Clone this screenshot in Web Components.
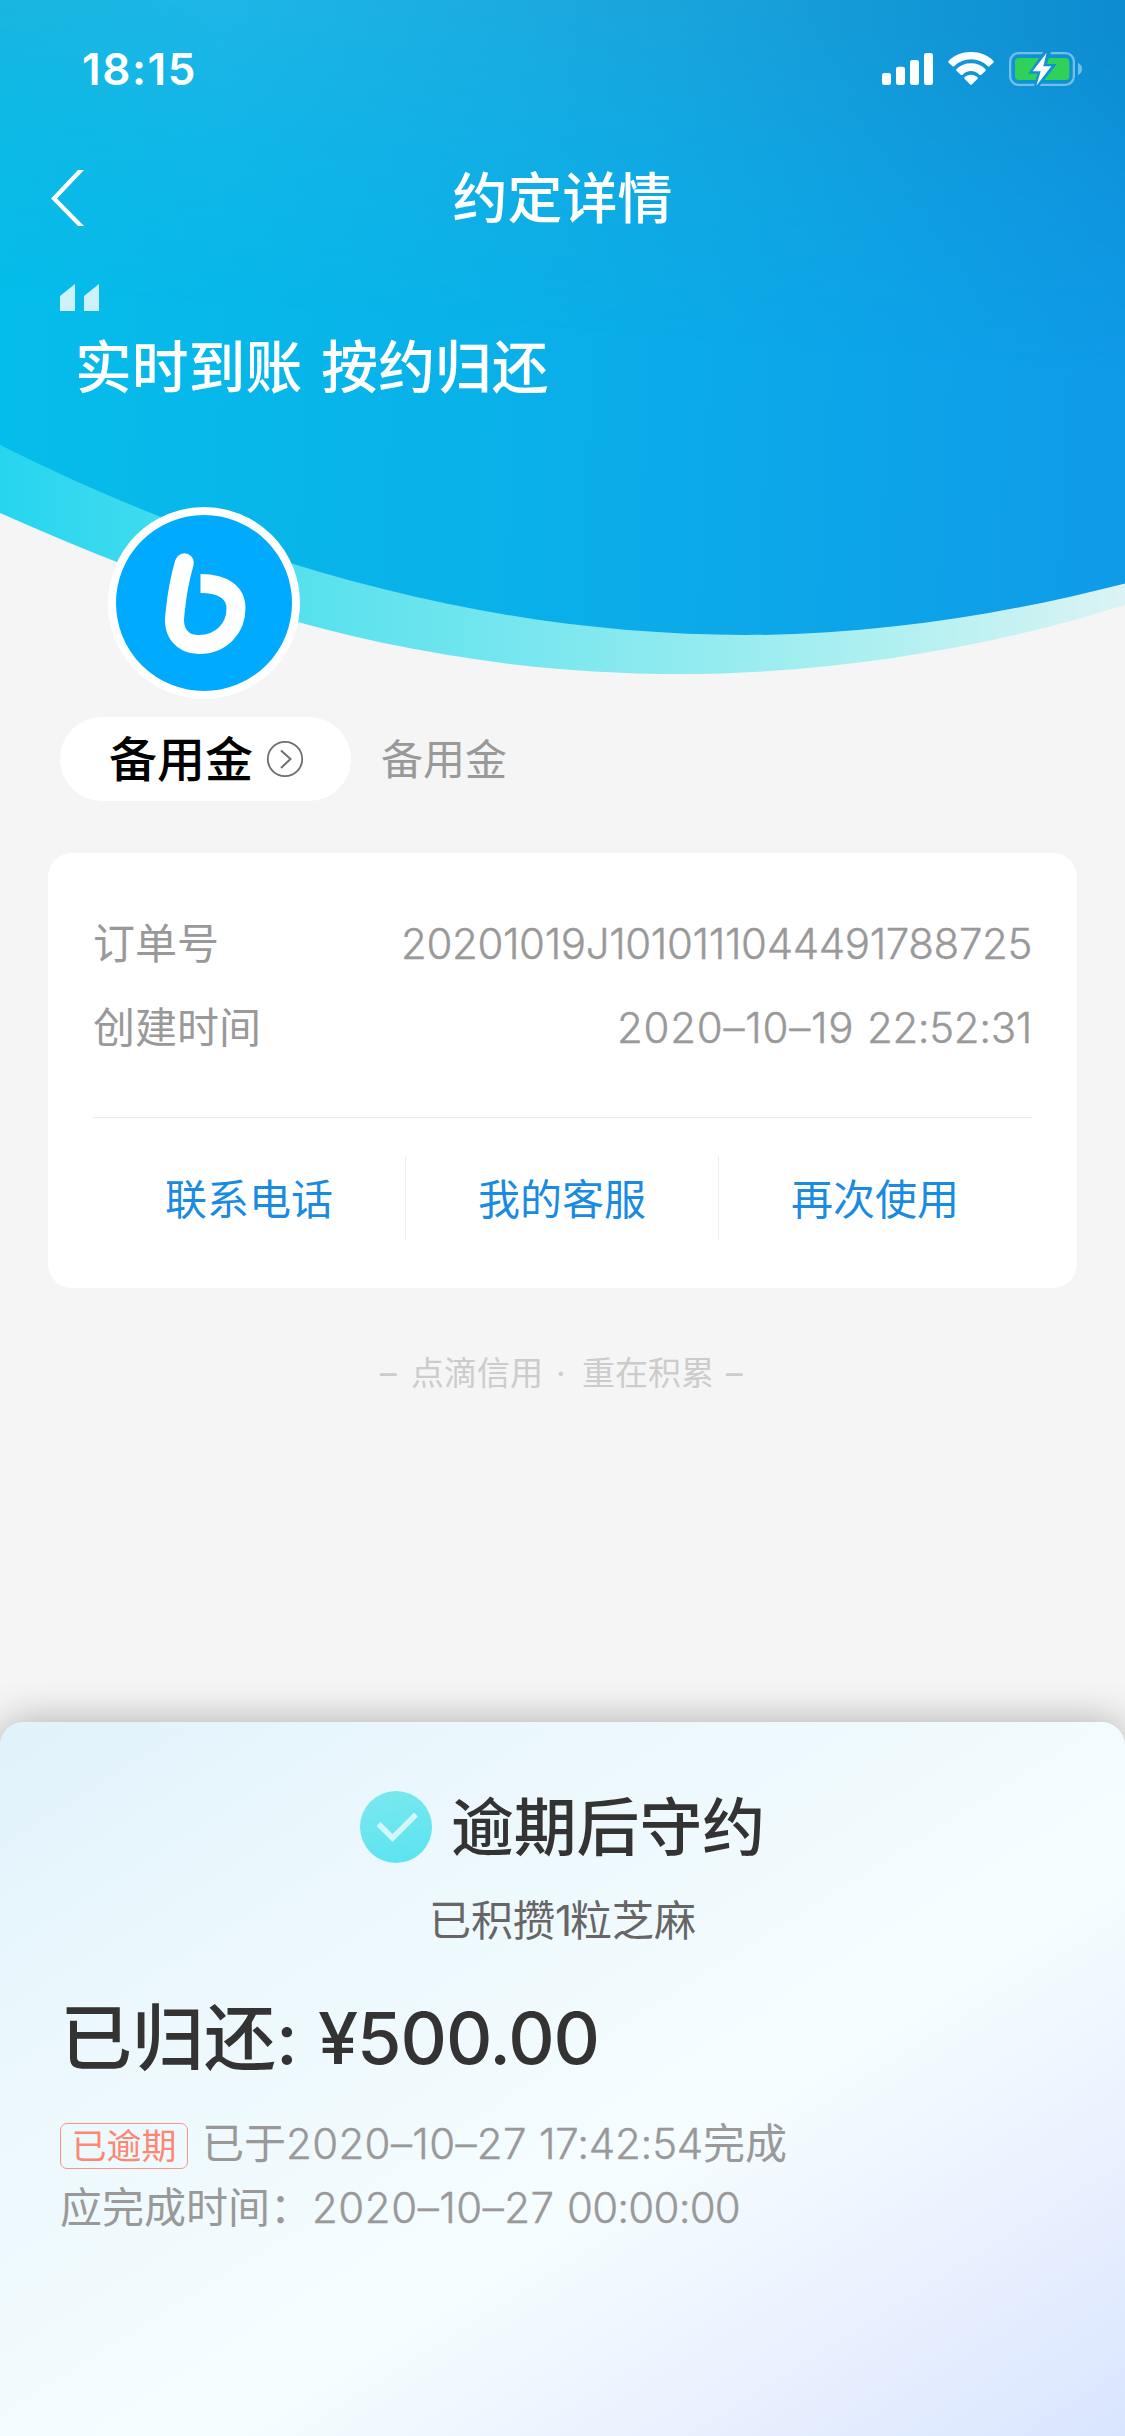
<!DOCTYPE html>
<html lang="zh-CN">
<head>
<meta charset="utf-8">
<title>约定详情</title>
<style>
html,body{margin:0;padding:0}
body{width:1125px;height:2436px;overflow:hidden;background:#f5f5f5;font-family:Inter,"Noto Sans CJK SC",sans-serif}
</style>
</head>
<body>
<agreement-page></agreement-page>
<script>
function define(name, html, setup) {
  const tpl = document.createElement('template');
  tpl.innerHTML = html;
  customElements.define(name, class extends HTMLElement {
    constructor() {
      super();
      this.attachShadow({mode: 'open'}).appendChild(tpl.content.cloneNode(true));
    }
    connectedCallback() { if (setup) setup(this); }
  });
}

/* Text run whose tracking is adjusted so that it fills a given advance width. */
define('fit-text', `<style>:host{display:inline-block;white-space:pre}span{display:inline-block}</style><span><slot></slot></span>`, el => {
  const span = el.shadowRoot.querySelector('span');
  const want = +el.getAttribute('width');
  const n = el.textContent.length;
  el.style.width = want + 'px';
  span.style.letterSpacing = (want - span.getBoundingClientRect().width) / n + 'px';
});

define('status-bar', `
<style>
:host{display:flex;align-items:center;justify-content:space-between;height:132px;padding:6px 41px 0 82px;box-sizing:border-box;color:#fff}
.t{font-size:44px;font-weight:600;line-height:60px}
svg{display:block}
</style>
<fit-text class="t" width="115">18:15</fit-text>
<svg width="204" height="38" viewBox="60 60 612 114">
  <g fill="#fff">
    <rect x="66" y="129" width="27" height="36" rx="7"/><rect x="108" y="110" width="27" height="55" rx="7"/>
    <rect x="150" y="90" width="27" height="75" rx="7"/><rect x="192" y="69" width="27" height="96" rx="7"/>
    <path d="M333 66C306 66 283 76 266 92Q263 95 266 98L277 108Q280 111 283 108C297 95 314 88 333 88S369 95 383 108Q386 111 389 108L400 98Q403 95 400 92C383 76 360 66 333 66Z"/>
    <path d="M333 100C316 100 301 106 290 117Q287 120 290 123L302 134Q305 136 308 134C315 127 323 123 333 123S351 127 358 134Q361 136 364 134L376 123Q379 120 376 117C365 106 350 100 333 100Z"/>
    <path d="M333 134C325 134 319 137 314 141Q311 144 314 147L330 163Q333 166 336 163L352 147Q355 144 352 141C347 137 341 134 333 134Z"/>
  </g>
  <defs><mask id="cut"><rect x="440" y="60" width="232" height="114" fill="#fff"/><path d="M561 60L516 125H541L526 174L578 108H552L569 60Z" fill="#000" stroke="#000" stroke-width="12"/></mask></defs>
  <g mask="url(#cut)">
    <rect x="450.5" y="69.500" width="191" height="95" rx="25" fill="none" stroke="#fff" stroke-opacity=".42" stroke-width="7"/>
    <rect x="465" y="84" width="163" height="66" rx="12" fill="#30d158"/>
  </g>
  <path d="M654 99Q666 104 666 117T654 135Z" fill="#fff" fill-opacity=".42"/>
  <path d="M560 68L518 124H542L529 167L574 109H550Z" fill="#fff"/>
</svg>`);

define('nav-bar', `
<style>
:host{display:grid;grid-template-columns:120px 1fr 120px;align-items:center;height:132px;color:#fff}
svg{display:block;margin-left:48px}
.t{text-align:center;font-size:55px;font-weight:500;line-height:72px}
</style>
<svg width="40" height="58" viewBox="0 0 40 58"><path d="M36 1H30L3 29.500L30 57H36L9 29.500Z" fill="#fff"/></svg>
<div class="t"><slot></slot></div>`);

define('slogan-quote', `
<style>
:host{display:block;color:#fff;padding:20px 0 0 60px}
svg{display:block}
.t{font-size:56.800px;font-weight:500;line-height:72px;margin:21px 0 -2px 15px;word-spacing:4px;white-space:nowrap}
</style>
<svg width="39" height="27" viewBox="0 0 39 27"><path d="M0 12L15 0V27H0ZM24 12L39 0V27H24Z" fill="#fff" fill-opacity=".8"/></svg>
<div class="t"><slot></slot></div>`);

define('hero-wave', `
<style>:host{display:block}svg{display:block}</style>
<svg width="1125" height="690" viewBox="0 0 1125 690">
  <defs>
    <linearGradient id="a" gradientUnits="userSpaceOnUse" x1="0" x2="1125" y1="290" y2="340"><stop offset="0" stop-color="#05bdea"/><stop offset=".5" stop-color="#0aafe9"/><stop offset="1" stop-color="#0f9be8"/></linearGradient>
    <linearGradient id="b" x1="0" x2="1"><stop offset="0" stop-color="#27d5ef"/><stop offset=".3" stop-color="#5ce2ee"/><stop offset=".55" stop-color="#86e9ef"/><stop offset=".8" stop-color="#b2f0f1"/><stop offset="1" stop-color="#dbf3f4"/></linearGradient>
    <linearGradient id="c" x1="0" x2="1"><stop offset="0" stop-color="#1fb4dd"/><stop offset=".2" stop-color="#24b5e5"/><stop offset=".6" stop-color="#1ba3da"/><stop offset="1" stop-color="#0d8ace"/></linearGradient>
    <linearGradient id="f" gradientUnits="userSpaceOnUse" x1="580" x2="555" y1="0" y2="330"><stop offset="0" stop-color="#fff" stop-opacity=".9"/><stop offset=".5" stop-color="#fff" stop-opacity=".35"/><stop offset="1" stop-color="#fff" stop-opacity="0"/></linearGradient>
    <mask id="m"><rect width="1125" height="690" fill="url(#f)"/></mask>
  </defs>
  <path fill="url(#b)" d="M0 0V513C230 616 440 674 681 674C830 674 990 648 1125 605V0Z"/>
  <path fill="url(#a)" d="M0 0V445C250 570 500 635 746 635C880 635 1010 613 1125 583.500V0Z"/>
  <rect width="1125" height="440" fill="url(#c)" mask="url(#m)"/>
</svg>`);

define('brand-avatar', `
<style>:host{display:block;width:176px;height:176px;border:8px solid #fff;border-radius:50%;background:#0af}svg{display:block}</style>
<svg width="176" height="176" viewBox="116 515.500 176 176" fill="none" stroke="#fff">
  <path d="M184.500 563Q178 584 175 614C172 634 183 645 199 645C222 645 236 628 236 609C236 594 225 584 200.500 584" stroke-width="19"/>
  <circle cx="184.500" cy="563" r="9.300" fill="#fff" stroke="none"/>
</svg>`);

define('merchant-row', `
<style>
:host{display:flex;align-items:center;height:84px;gap:30px;line-height:60px}
.pill{display:flex;align-items:center;height:84px;width:291px;border-radius:42px;background:#fff;box-sizing:border-box;padding-left:49px;gap:13px;font-size:48px;font-weight:500;color:#000}
.sub{font-size:42px;color:#999;font-weight:400}
.pill span,.sub{padding-top:2px}
svg{display:block}
</style>
<div class="pill"><span><slot></slot></span>
<svg width="38" height="38" viewBox="0 0 38 38" fill="none" stroke="#6e6e6e" stroke-width="1.800"><circle cx="19" cy="19" r="17.200"/><path d="M15 10.500L24.500 19L15 28"  stroke-width="2"/></svg></div>
<span class="sub"><slot name="sub"></slot></span>`);

define('info-row', `
<style>:host{display:flex;justify-content:space-between;align-items:center;height:84px;font-size:42px;line-height:60px;color:#999}.v{font-weight:300;-webkit-text-stroke:.4px #999}</style>
<span><slot></slot></span><span class="v"><slot name="value"></slot></span>`);

define('action-link', `
<style>:host{flex:1;display:flex;align-items:center;justify-content:center;height:84px;padding-top:3px;font-size:42px;line-height:60px;color:#1a8be0;box-sizing:border-box;border-right:1px solid #eee}:host(:last-of-type){border-color:transparent}</style><slot></slot>`);

define('order-card', `
<style>
:host{display:block;background:#fff;border-radius:24px;height:435px;box-sizing:border-box;padding:49px 45px 0}
.line{height:1px;background:#e9e9e9;margin-top:47px}
.acts{display:flex;margin-top:38px}
</style>
<slot></slot><div class="line"></div><div class="acts"><slot name="action"></slot></div>`);

define('result-panel', `
<style>
:host{display:flex;flex-direction:column;height:714px;box-sizing:border-box;padding:63px 60px 0;border-radius:24px 24px 0 0;box-shadow:0 0 42px rgba(0,0,0,.3);
background:linear-gradient(148deg,#e1f2fb 0%,#ecf8fd 27%,#f5fdff 60%,#ecf2fe 77%,#d9e5ff 100%)}
.head{display:flex;justify-content:center;align-items:center;height:84px;line-height:84px;gap:19px;font-size:62.800px;font-weight:500;color:#333}
.sub{text-align:center;font-size:42px;line-height:60px;color:#666;margin-top:22px}
.amt{display:flex;font-size:72px;line-height:100px;color:#333;font-weight:500;margin-top:37px;white-space:pre}
.l{display:flex;align-items:center;font-size:42px;line-height:64px;height:64px;color:#999}
.l fit-text{font-weight:300;-webkit-text-stroke:.4px #999}
.l1{margin-top:24px}
.tag{font-size:35px;line-height:44px;height:44px;border:1.500px solid #fb9585;border-radius:7px;color:#fb8872;width:126px;text-align:center;margin:3px 14px 0 0}
svg{display:block}
</style>
<div class="head"><svg width="72" height="72" viewBox="0 0 72 72"><defs><linearGradient id="g" x1=".2" x2=".5" y1="0" y2="1"><stop stop-color="#7ae8ee"/><stop offset="1" stop-color="#5de4f1"/></linearGradient></defs><circle cx="36" cy="36" r="36" fill="url(#g)"/><path d="M18.500 33L32.500 47L56 23.500" fill="none" stroke="#d2f7fb" stroke-width="5.500"/></svg><span>逾期后守约</span></div>
<div class="sub">已积攒<fit-text width="15">1</fit-text>粒芝麻</div>
<div class="amt"><span>已归还</span><fit-text width="42">: </fit-text><fit-text width="281">¥500.00</fit-text></div>
<div class="l l1"><span class="tag">已逾期</span><span>已于</span><fit-text width="253">2020–10–27 </fit-text><fit-text width="164">17:42:54</fit-text><span>完成</span></div>
<div class="l"><span>应完成时间：</span><fit-text width="255">2020–10–27 </fit-text><fit-text width="173">00:00:00</fit-text></div>`);

define('agreement-page', `
<style>
:host{display:flex;flex-direction:column;position:relative;width:1125px;height:2436px;background:#f5f5f5;overflow:hidden}
hero-wave{position:absolute;left:0;top:0;z-index:0}
main{position:relative;display:flex;flex-direction:column;flex:1}
brand-avatar{margin:105px 0 0 108px}
merchant-row{margin:18px 0 0 60px}
order-card{margin:52px 48px 0}
.motto{display:flex;justify-content:center;font-size:33px;line-height:48px;color:#ccc;margin-top:61px;white-space:pre}
result-panel{margin-top:auto}
</style>
<hero-wave></hero-wave>
<main>
<status-bar></status-bar>
<nav-bar>约定详情</nav-bar>
<slogan-quote>实时到账 按约归还</slogan-quote>
<brand-avatar></brand-avatar>
<merchant-row>备用金<span slot="sub">备用金</span></merchant-row>
<order-card>
  <info-row>订单号<fit-text slot="value" width="631">20201019J1010111044491788725</fit-text></info-row>
  <info-row>创建时间<span slot="value"><fit-text width="250">2020–10–19 </fit-text><fit-text width="165">22:52:31</fit-text></span></info-row>
  <action-link slot="action">联系电话</action-link>
  <action-link slot="action">我的客服</action-link>
  <action-link slot="action">再次使用</action-link>
</order-card>
<div class="motto"><fit-text width="31">– </fit-text><span>点滴信用</span><fit-text width="39"> · </fit-text><span>重在积累</span><fit-text width="31"> –</fit-text></div>
<result-panel></result-panel>
</main>`);
</script>
</body>
</html>
